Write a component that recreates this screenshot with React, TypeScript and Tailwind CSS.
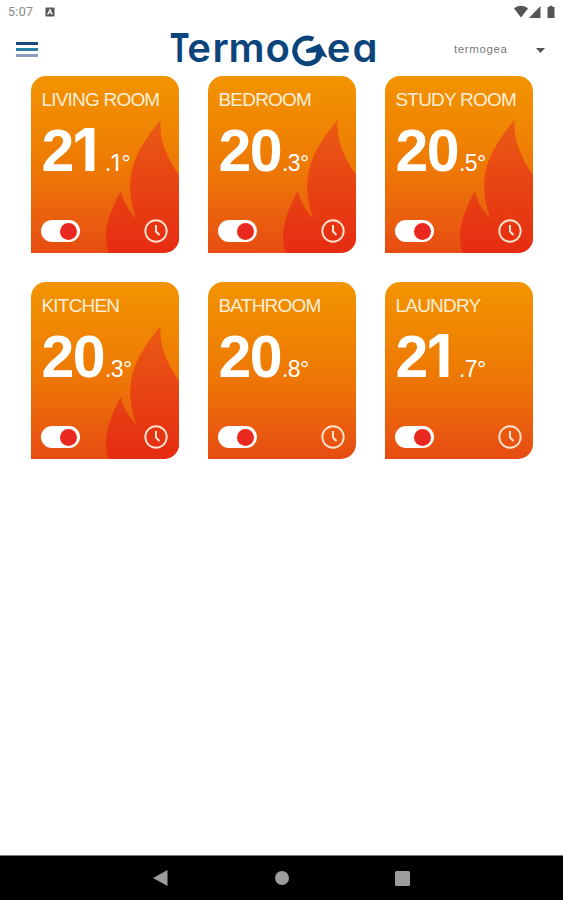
type Room = {
  name: string;
  whole: string;
  tenth: string;
  heating: boolean;
};

const rooms: Room[] = [
  { name: "LIVING ROOM", whole: "21", tenth: "1", heating: true },
  { name: "BEDROOM", whole: "20", tenth: "3", heating: true },
  { name: "STUDY ROOM", whole: "20", tenth: "5", heating: true },
  { name: "KITCHEN", whole: "20", tenth: "3", heating: true },
  { name: "BATHROOM", whole: "20", tenth: "8", heating: false },
  { name: "LAUNDRY", whole: "21", tenth: "7", heating: false },
];

function StatusBar() {
  return (
    <div className="flex h-6 items-center justify-between pl-2 pr-[7px]">
      <div className="flex items-center gap-3">
        <span className="font-['Roboto',sans-serif] text-[12.5px] leading-none tracking-[0.3px] text-[#8a8a8a]">5:07</span>
        <svg width="10" height="10" viewBox="0 0 10 10">
          <rect x="0.5" y="0.5" width="9" height="9" rx="1" fill="#555" />
          <path d="M2.6 7.6 5 2.6l2.4 5M3.6 6h2.8" fill="none" stroke="#fff" strokeWidth="1.2" />
        </svg>
      </div>
      <svg width="42" height="14" viewBox="0 0 42 14" fill="#555">
        <path d="M0 3.6C4-.2 10-.2 14 3.6L7 12.6Z" />
        <path d="M26.5 1v12H15Z" />
        <path d="M35.5 2V.8h3V2h2v11h-7V2Z" />
      </svg>
    </div>
  );
}

function Logo() {
  return (
    <svg
      width="212"
      height="48"
      viewBox="168 26 212 48"
      fill="#0b457c"
      className="overflow-visible font-['Inter',sans-serif] font-semibold"
    >
      <g fontSize="40" style={{ fontFeatureSettings: '"cv11"' }}>
        <text transform="translate(169.800 61.500) scale(.74 1)" className="font-bold">T</text>
        <text y="61.5" x="187.2 212.5 228.5 265.5">ermo</text>
        <text y="61.5" x="326.8 352.5">ea</text>
      </g>
      <path d="M313.2 39.2A12.9 12.9 0 1 0 320 54.500" fill="none" stroke="#0b457c" strokeWidth="5" />
      <path d="M319.8 43.8 327.5 57.8l-5.500-1.800-2.500 3-4.500-2 1.500-4.500-10 .5-.5-3.500Z" />
    </svg>
  );
}

function Header() {
  return (
    <header className="grid h-[50px] grid-cols-[168px_212px_1fr] items-center">
      <button className="ml-4 flex w-[22px] flex-col gap-[3px]" aria-label="Menu">
        <span className="h-[3px] bg-[#1c4a7c]" />
        <span className="h-[3px] bg-[#2d7dab]" />
        <span className="h-[3px] bg-[#8f9bbd]" />
      </button>
      <div className="pt-0.5">
        <Logo />
      </div>
      <div className="flex items-center justify-between pl-[74px] pr-[18px] pt-0.5">
        <span className="font-['Liberation_Sans',sans-serif] text-[11.5px] leading-none tracking-[0.6px] text-[#7a7a7a]">termogea</span>
        <svg width="9" height="5" viewBox="0 0 9 5">
          <path d="M0 0h9L4.5 5Z" fill="#555" />
        </svg>
      </div>
    </header>
  );
}

function Flame() {
  return (
    <svg className="absolute inset-0" width="148" height="177" viewBox="0 0 148 177">
      <defs>
        <linearGradient id="flame" x1="0" y1="0" x2="0" y2="1">
          <stop offset="0" stopColor="#ea5b14" />
          <stop offset="1" stopColor="#e62c12" />
        </linearGradient>
      </defs>
      <path
        d="M129.5 44C128 65 137 83 148 99v78H77.5C72 157 76 141 90 114.5C92 127 99 136 105.5 142.5C99 126 97 107 102 90C106 76 116 60 129.5 44Z"
        fill="url(#flame)"
      />
    </svg>
  );
}

function Toggle() {
  return (
    <span className="flex h-[22px] w-[39px] items-center justify-end rounded-full bg-white pr-[3px]">
      <span className="size-[17px] rounded-full bg-[#e9291f]" />
    </span>
  );
}

// Inter draws the "1" without a foot
function Digits({ value }: { value: string }) {
  return value.split("").map((d, i) =>
    d === "1" ? (
      <span key={i} className="pr-[0.08em] font-['Inter',sans-serif] leading-[0]">{d}</span>
    ) : (
      <span key={i}>{d}</span>
    )
  );
}

function RoomCard({ room }: { room: Room }) {
  return (
    <div className="relative h-[177px] overflow-hidden rounded-[15px] rounded-bl-none bg-linear-to-b from-[#f29400] via-[#ee7a04] to-[#e74b12] text-white">
      {room.heating && <Flame />}
      <div className="relative flex h-full flex-col pb-2.5 pl-[11px] pr-[11px] pt-[13px]">
        <h2 className="whitespace-nowrap text-[19px] leading-[21px] tracking-[-0.8px] text-[#ffeeda]">{room.name}</h2>
        <div className="mt-3 flex h-[58px] items-baseline">
          <span className="w-[63.5px] whitespace-nowrap text-[59px] font-bold leading-[58px] tracking-[-1.5px]">
            <Digits value={room.whole} />
          </span>
          <span className="whitespace-nowrap text-[23px] leading-none tracking-[-0.6px]">
            .<Digits value={room.tenth} />°
          </span>
        </div>
        <div className="-ml-px mt-auto flex items-center justify-between">
          <Toggle />
          <svg width="24" height="24" viewBox="0 0 24 24" fill="none" stroke="#ffe3cf">
            <circle cx="12" cy="12" r="10.7" strokeWidth="1.9" />
            <path d="M12 6v6.5l3.5 3.5" strokeWidth="2" />
          </svg>
        </div>
      </div>
    </div>
  );
}

function NavBar() {
  return (
    <nav className="flex h-[45px] items-center justify-between border-t border-[#777] bg-black px-[153px]">
      <svg width="15" height="16" viewBox="0 0 15 16">
        <path d="M0 8 14.5 0v16Z" fill="#9c9c9c" />
      </svg>
      <span className="size-[14px] rounded-full bg-[#9c9c9c]" />
      <span className="size-[15px] rounded-[1.5px] bg-[#9c9c9c]" />
    </nav>
  );
}

export default function App() {
  return (
    <div className="flex h-screen flex-col bg-white">
      <StatusBar />
      <Header />
      <main className="grid flex-1 grid-cols-[repeat(3,148px)] content-start gap-[29px] pl-[30.5px] pt-0.5 font-['Liberation_Sans',sans-serif]">
        {rooms.map((room) => (
          <RoomCard key={room.name} room={room} />
        ))}
      </main>
      <NavBar />
    </div>
  );
}
